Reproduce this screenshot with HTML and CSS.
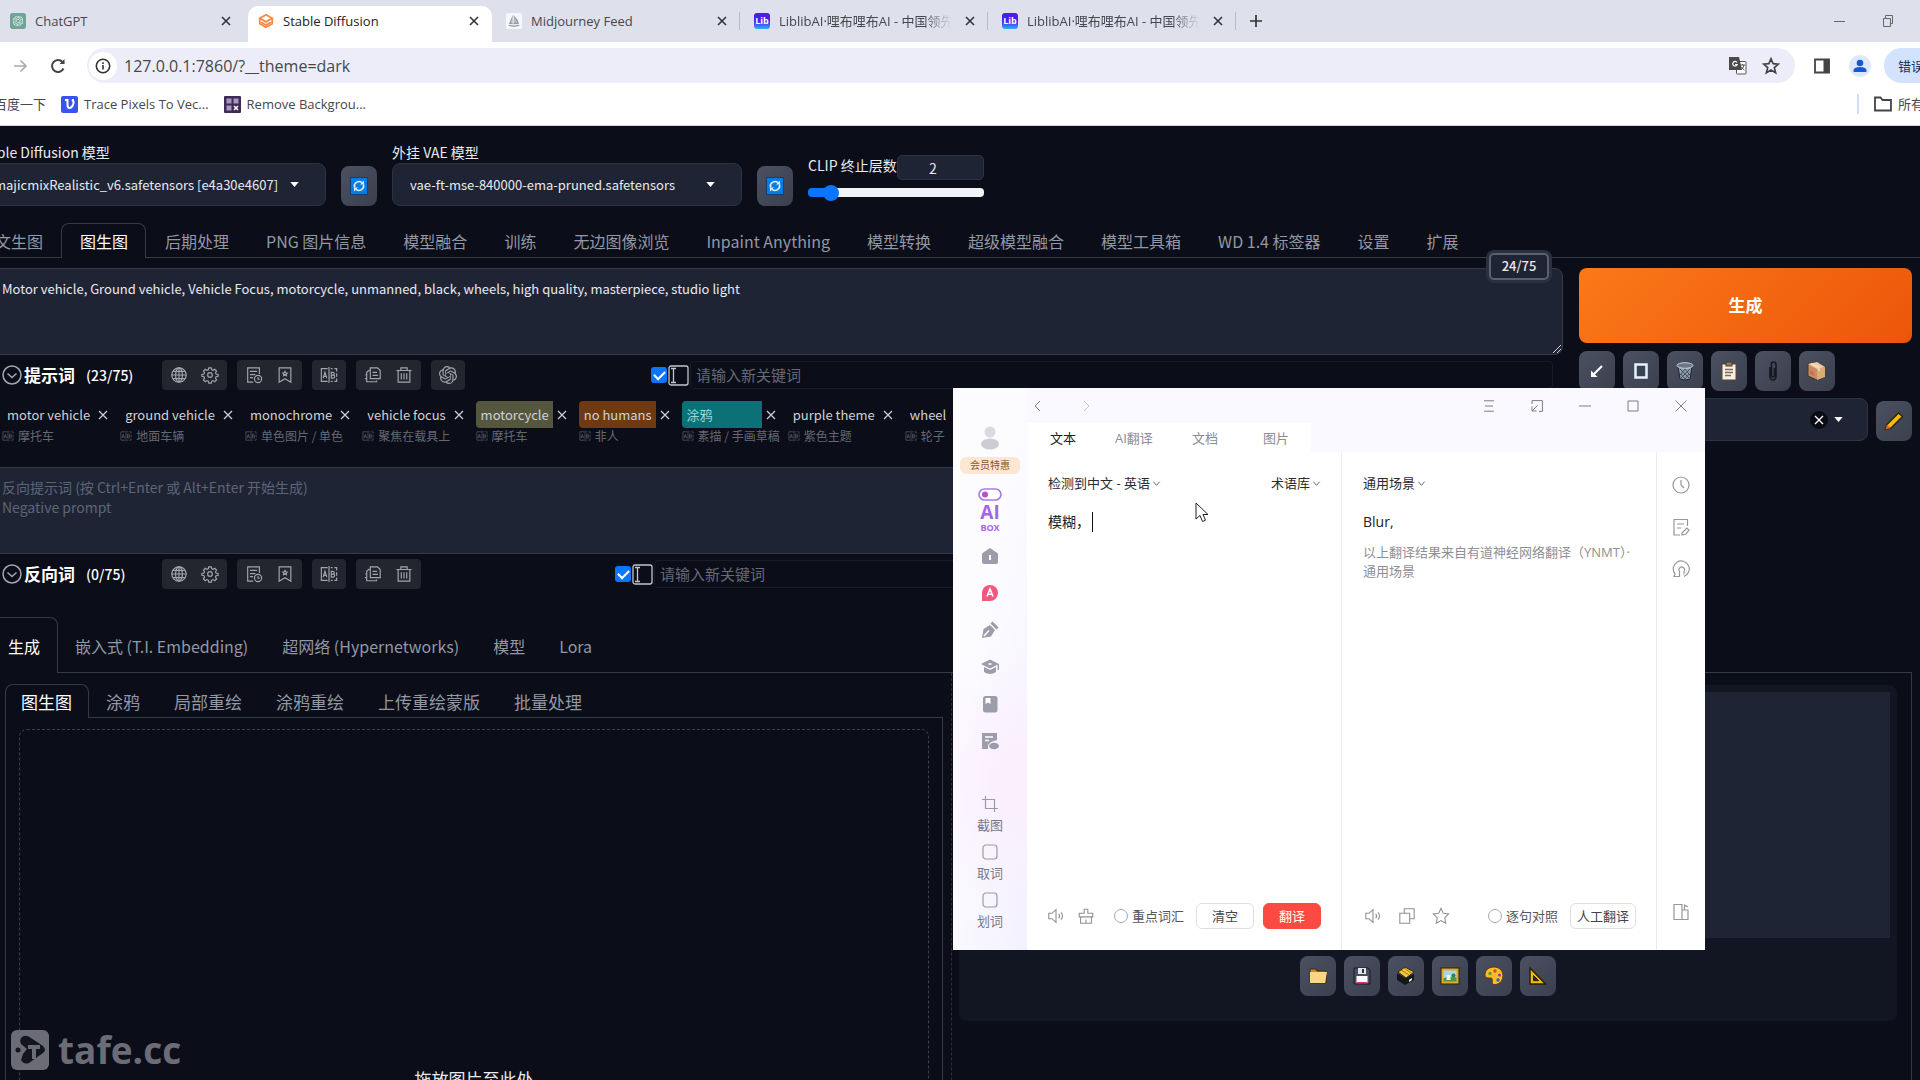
FILE: index.html
```html
<!DOCTYPE html>
<html lang="zh-CN">
<head>
<meta charset="utf-8">
<title>Stable Diffusion</title>
<link rel="stylesheet" href="styles.css">
</head>
<body>
<svg class="sprite" aria-hidden="true">
  <symbol id="x" viewBox="0 0 12 12"><path d="M2 2l8 8M10 2l-8 8"/></symbol>
  <symbol id="chev" viewBox="0 0 10 10"><path d="M1.500 3l3.500 4 3.500-4"/></symbol>
  <symbol id="caret" viewBox="0 0 10 6"><path d="M0 0h10l-5 6z"/></symbol>
  <symbol id="refresh" viewBox="0 0 18 18"><rect width="18" height="18" fill="#0b3f78"/><rect x="1" y="1" width="16" height="16" fill="#0a7be0"/><g fill="none" stroke="#d9efff" stroke-width="1.600"><path d="M4.600 10.500a4.600 4.600 0 0 1 7.300-4.900M13.400 7.500a4.600 4.600 0 0 1-7.300 4.900"/></g><path d="M10 7.500h4v-4zM8 10.500H4v4z" fill="#d9efff"/></symbol>
  <symbol id="globe" viewBox="0 0 20 20"><circle cx="10" cy="10" r="8"/><ellipse cx="10" cy="10" rx="3.800" ry="8"/><path d="M2 10h16M10 2v16M3.300 6h13.400M3.300 14h13.400"/></symbol>
  <symbol id="gear" viewBox="0 0 20 20"><circle cx="10" cy="10" r="2.600"/><path d="M8.600 2h2.800l.5 2.200 1.500.6 1.900-1.200 2 2-1.200 1.900.6 1.500 2.300.5v1.900l-2.300.6-.6 1.500 1.200 1.900-2 2-1.900-1.200-1.500.6-.5 2.200H8.600l-.5-2.200-1.500-.6-1.900 1.200-2-2 1.200-1.900-.6-1.500L1 11.400V9.500L3.300 9l.6-1.500-1.200-1.900 2-2 1.900 1.200 1.500-.6z"/></symbol>
  <symbol id="history" viewBox="0 0 20 20"><path d="M9 18H3V2h13v7M5.500 6h8M5.500 9.500h6M5.500 13H9"/><circle cx="14.500" cy="14.500" r="4"/><path d="M14.500 12.500v2.200h2"/></symbol>
  <symbol id="mark" viewBox="0 0 20 20"><path d="M3.500 2h13v16L10 14.200 3.500 18zM10 6l.8 1.500 1.700.3-1.200 1.200.3 1.700-1.600-.8-1.600.8.3-1.700L7.500 7.800l1.700-.3z"/></symbol>
  <symbol id="ab" viewBox="0 0 20 20"><path d="M8.500 3H1.500v14h7M10 1v18M12 3h2M16 3h2.500v3M18.500 8v4M18.500 14v3H16M14 17h-2M3.500 13.500L5.500 7l2 6.500M4.200 11.500h2.700M12.500 7v6.500h2.400q1.400-.2 1.400-1.800t-1.800-1.600q1.400-.1 1.400-1.500T14.500 7zM12.500 10.100h2"/></symbol>
  <symbol id="copy" viewBox="0 0 20 20"><path d="M7 2h8l3 3v9H7zM9.500 7h5M9.500 10.500h6M6 4.500L3 7v10.500h11V16M3 10H1.500M3 14H1"/></symbol>
  <symbol id="bin" viewBox="0 0 20 20"><path d="M1.500 5h17M6.500 5V2h7v3M3.500 5v13h13V5M7 8v7M10 8v7M13 8v7"/></symbol>
  <symbol id="gpt" viewBox="0 0 24 24"><path d="M22.2819 9.8211a5.9847 5.9847 0 0 0-.5157-4.9108 6.0462 6.0462 0 0 0-6.5098-2.9A6.0651 6.0651 0 0 0 4.9807 4.1818a5.9847 5.9847 0 0 0-3.9977 2.9 6.0462 6.0462 0 0 0 .7427 7.0966 5.98 5.98 0 0 0 .511 4.9107 6.051 6.051 0 0 0 6.5146 2.9001A5.9847 5.9847 0 0 0 13.2599 24a6.0557 6.0557 0 0 0 5.7718-4.2058 5.9894 5.9894 0 0 0 3.9977-2.9001 6.0557 6.0557 0 0 0-.7475-7.0729zm-9.022 12.6081a4.4755 4.4755 0 0 1-2.8764-1.0408l.1419-.0804 4.7783-2.7582a.7948.7948 0 0 0 .3927-.6813v-6.7369l2.02 1.1686a.071.071 0 0 1 .038.052v5.5826a4.504 4.504 0 0 1-4.4945 4.4944zm-9.6607-4.1254a4.4708 4.4708 0 0 1-.5346-3.0137l.142.0852 4.783 2.7582a.7712.7712 0 0 0 .7806 0l5.8428-3.3685v2.3324a.0804.0804 0 0 1-.0332.0615L9.74 19.9502a4.4992 4.4992 0 0 1-6.1408-1.6464zM2.3408 7.8956a4.485 4.485 0 0 1 2.3655-1.9728V11.6a.7664.7664 0 0 0 .3879.6765l5.8144 3.3543-2.0201 1.1685a.0757.0757 0 0 1-.071 0l-4.8303-2.7865A4.504 4.504 0 0 1 2.3408 7.872zm16.5963 3.8558L13.1038 8.364 15.1192 7.2a.0757.0757 0 0 1 .071 0l4.8303 2.7913a4.4944 4.4944 0 0 1-.6765 8.1042v-5.6772a.79.79 0 0 0-.407-.667zm2.0107-3.0231l-.142-.0852-4.7735-2.7818a.7759.7759 0 0 0-.7854 0L9.409 9.2297V6.8974a.0662.0662 0 0 1 .0284-.0615l4.8303-2.7866a4.4992 4.4992 0 0 1 6.6802 4.66zM8.3065 12.863l-2.02-1.1638a.0804.0804 0 0 1-.038-.0567V6.0742a4.4992 4.4992 0 0 1 7.3757-3.4537l-.142.0805L8.704 5.459a.7948.7948 0 0 0-.3927.6813zm1.0976-2.3654l2.602-1.4998 2.6069 1.4998v2.9994l-2.5974 1.4997-2.6067-1.4997Z"/></symbol>
  <symbol id="ibeam" viewBox="0 0 21 21"><rect x="1" y="1" width="19" height="19" rx="2"/><path d="M3 3.500h5M3 17.500h5M5.500 3.500v14"/></symbol>
  <symbol id="fold" viewBox="0 0 20 20"><circle cx="10" cy="10" r="9"/><path d="M5.500 8.500L10 12.500l4.500-4"/></symbol>
  <symbol id="sound" viewBox="0 0 20 20"><path d="M2 7h3.500L10 3v14l-4.500-4H2zM13 7.500q2 2.500 0 5M15.500 6q3.500 4 0 8"/></symbol>
</svg>

<div class="app">
  <header class="chrome">
    <nav class="tabstrip" aria-label="标签页">
      <a class="btab" href="#"><svg class="fav" viewBox="0 0 18 18"><rect width="18" height="18" rx="3" fill="#6fa596"/><g transform="translate(3 3) scale(.5)" fill="#e3f1ed"><use href="#gpt" width="24" height="24"/></g></svg><span class="btitle">ChatGPT</span><svg class="close"><use href="#x"/></svg></a>
      <a class="btab on" href="#"><svg class="fav" viewBox="0 0 18 18" fill="none" stroke="#f58a45" stroke-width="2"><path d="M2 6l7-4 7 4-7 4zM2 6v6l7 4 7-4V6M2 9.500l7 4 7-4"/></svg><span class="btitle">Stable Diffusion</span><svg class="close"><use href="#x"/></svg></a>
      <a class="btab" href="#"><svg class="fav" viewBox="0 0 18 18"><rect width="18" height="18" rx="2" fill="#f6f7fa"/><path d="M4 12L8 3q5 3 6 9zM3 14q6 2 12 0" fill="#b3b7c0" stroke="#888d98"/><path d="M8 3v9" stroke="#fff"/></svg><span class="btitle">Midjourney Feed</span><svg class="close"><use href="#x"/></svg></a>
      <a class="btab sep" href="#"><span class="lib">Lib</span><span class="btitle">LiblibAI·哩布哩布AI - 中国领先</span><svg class="close"><use href="#x"/></svg></a>
      <a class="btab sep" href="#"><span class="lib">Lib</span><span class="btitle">LiblibAI·哩布哩布AI - 中国领先</span><svg class="close"><use href="#x"/></svg></a>
      <button class="newtab" aria-label="新标签页"><svg viewBox="0 0 12 12" width="12" height="12"><path d="M6 0v12M0 6h12" stroke="#333" stroke-width="1.700"/></svg></button>
      <span class="grow"></span>
      <svg class="winctl" viewBox="0 0 60 12" width="60" height="12" fill="none" stroke="#666"><path d="M0 6.500h11M49.500 3.500h7v8h-7zM51.500 3V.5h7v8H57"/></svg>
    </nav>
    <div class="toolbar">
      <svg class="tico" viewBox="0 0 18 18" stroke="#a9abb0" stroke-width="1.700" fill="none"><path d="M3 9h12M9.500 3.500L15 9l-5.500 5.500"/></svg>
      <svg class="tico" viewBox="0 0 18 18" stroke="#444" stroke-width="2" fill="none"><path d="M14.500 11.500A6 6 0 1 1 13.500 5L15 6.500"/><path d="M15.500 2v5h-5z" fill="#444" stroke="none"/></svg>
      <div class="omnibox">
        <span class="info"><svg viewBox="0 0 16 16" width="16" height="16" fill="none" stroke="#333" stroke-width="1.600"><circle cx="8" cy="8" r="6.700"/><path d="M8 7v4.500M8 4.300v1.600"/></svg></span>
        <input class="url" aria-label="地址" value="127.0.0.1:7860/?__theme=dark">
        <svg viewBox="0 0 20 20" width="20" height="20"><rect x="8.500" y="5.500" width="9.500" height="12.500" rx="1" fill="#fff" stroke="#555"/><path d="M1 1h10l3 13H1z" fill="#4a4a4a"/><path d="M9 6.500a2.300 2.300 0 1 0 .2 2H7" fill="none" stroke="#fff" stroke-width="1.200"/><path d="M12 9h5M14.500 8v1M16 9q-1 4-3 5M13.500 11q1 2 3 3" fill="none" stroke="#555"/></svg>
        <svg viewBox="0 0 18 18" width="18" height="18" fill="none" stroke="#444" stroke-width="1.700"><path d="M9 1.800l2.100 4.900 5.200.4-4 3.500 1.300 5.200L9 13l-4.600 2.800 1.300-5.200-4-3.500 5.200-.4z"/></svg>
      </div>
      <svg class="tico panel" viewBox="0 0 18 18"><path d="M2 2.500h14v13H2z" fill="none" stroke="#444" stroke-width="1.800"/><path d="M10.500 2h6v14h-6z" fill="#444"/></svg>
      <svg viewBox="0 0 22 22" width="22" height="22"><circle cx="11" cy="11" r="11" fill="#dfe7fd"/><circle cx="11" cy="8" r="3.300" fill="#1a57d6"/><path d="M4.500 17v-1.500q0-3.500 6.500-3.500t6.500 3.500V17z" fill="#1a57d6"/></svg>
      <button class="errpill">错误</button>
    </div>
    <nav class="bookmarks" aria-label="书签">
      <a class="bm first" href="#">百度一下</a>
      <a class="bm" href="#"><svg viewBox="0 0 17 17" width="17" height="17"><rect width="17" height="17" rx="2" fill="#3b53ee"/><path d="M4 4h2.500v5q0 3 2 3t3.500-3q1.500-4-1-5h2" fill="none" stroke="#fff" stroke-width="2"/></svg>Trace Pixels To Vec...</a>
      <a class="bm" href="#"><svg viewBox="0 0 17 17" width="17" height="17"><rect width="17" height="17" rx="1" fill="#3e2a57"/><path d="M2.500 2.500h5v5h-5zM9.500 2.500h5v5h-5zM2.500 9.500h5v5h-5z" fill="#a797bd"/><path d="M10 10l4 4M14 10l-4 4" stroke="#fff" stroke-width="1.500"/></svg>Remove Backgrou...</a>
      <span class="grow"></span>
      <a class="bm all" href="#"><svg viewBox="0 0 18 16" width="18" height="16" fill="none" stroke="#444" stroke-width="1.800"><path d="M1 14.500v-13h5.500l2 2.500H17v10.500z"/></svg>所有</a>
    </nav>
  </header>

  <main class="page">
    <section class="quick">
      <div class="field"><label for="ckpt">Stable Diffusion 模型</label>
        <div class="combo"><input id="ckpt" value="majicmixRealistic_v6.safetensors [e4a30e4607]"><svg class="caret"><use href="#caret"/></svg></div></div>
      <button class="tool" aria-label="刷新模型"><svg width="18" height="18"><use href="#refresh"/></svg></button>
      <div class="field"><label for="vae">外挂 VAE 模型</label>
        <div class="combo"><input id="vae" value="vae-ft-mse-840000-ema-pruned.safetensors"><svg class="caret"><use href="#caret"/></svg></div></div>
      <button class="tool" aria-label="刷新 VAE"><svg width="18" height="18"><use href="#refresh"/></svg></button>
      <div class="clip">
        <div class="cliprow"><label for="clip">CLIP 终止层数</label><input class="num" id="clip" value="2"></div>
        <input class="range" type="range" min="1" max="12" value="2" aria-label="CLIP 终止层数">
      </div>
    </section>

    <nav class="tabs">
      <button class="tab">文生图</button><button class="tab on">图生图</button><button class="tab">后期处理</button><button class="tab">PNG 图片信息</button><button class="tab">模型融合</button><button class="tab">训练</button><button class="tab">无边图像浏览</button><button class="tab">Inpaint Anything</button><button class="tab">模型转换</button><button class="tab">超级模型融合</button><button class="tab">模型工具箱</button><button class="tab">WD 1.4 标签器</button><button class="tab">设置</button><button class="tab">扩展</button>
    </nav>

    <div class="top">
      <div class="prompts">
        <div class="area">
          <textarea class="prompt" aria-label="提示词">Motor vehicle, Ground vehicle, Vehicle Focus, motorcycle, unmanned, black, wheels, high quality, masterpiece, studio light</textarea>
          <svg class="grip" viewBox="0 0 8 8" width="8" height="8"><path d="M0 8l8-8M4 8l4-4" stroke="#d5d7dd"/></svg>
          <span class="counter">24/75</span>
        </div>
        <div class="ptools">
          <svg class="fold"><use href="#fold"/></svg><h2>提示词</h2><span class="count">(23/75)</span>
          <div class="groups">
            <div class="grp"><button aria-label="语言"><svg><use href="#globe"/></svg></button><button aria-label="设置"><svg><use href="#gear"/></svg></button></div>
            <div class="grp"><button aria-label="历史"><svg><use href="#history"/></svg></button><button aria-label="收藏"><svg><use href="#mark"/></svg></button></div>
            <div class="grp"><button aria-label="翻译"><svg><use href="#ab"/></svg></button></div>
            <div class="grp"><button aria-label="复制"><svg><use href="#copy"/></svg></button><button aria-label="删除"><svg><use href="#bin"/></svg></button></div>
            <div class="grp"><button aria-label="ChatGPT"><svg class="solid"><use href="#gpt"/></svg></button></div>
          </div>
          <div class="addkey wide"><input class="tick" type="checkbox" checked aria-label="启用"><svg class="ibeam"><use href="#ibeam"/></svg><input class="key" aria-label="新关键词" placeholder="请输入新关键词"></div>
        </div>
        <div class="tags">
          <div class="tag"><div class="trow"><span>motor vehicle</span><button aria-label="移除"><svg><use href="#x"/></svg></button></div><small><svg><use href="#ab"/></svg>摩托车</small></div>
          <div class="tag"><div class="trow"><span>ground vehicle</span><button aria-label="移除"><svg><use href="#x"/></svg></button></div><small><svg><use href="#ab"/></svg>地面车辆</small></div>
          <div class="tag"><div class="trow"><span>monochrome</span><button aria-label="移除"><svg><use href="#x"/></svg></button></div><small><svg><use href="#ab"/></svg>单色图片 / 单色</small></div>
          <div class="tag"><div class="trow"><span>vehicle focus</span><button aria-label="移除"><svg><use href="#x"/></svg></button></div><small><svg><use href="#ab"/></svg>聚焦在载具上</small></div>
          <div class="tag olive"><div class="trow"><span>motorcycle</span><button aria-label="移除"><svg><use href="#x"/></svg></button></div><small><svg><use href="#ab"/></svg>摩托车</small></div>
          <div class="tag brown"><div class="trow"><span>no humans</span><button aria-label="移除"><svg><use href="#x"/></svg></button></div><small><svg><use href="#ab"/></svg>非人</small></div>
          <div class="tag teal"><div class="trow"><span>涂鸦</span><button aria-label="移除"><svg><use href="#x"/></svg></button></div><small><svg><use href="#ab"/></svg>素描 / 手画草稿</small></div>
          <div class="tag"><div class="trow"><span>purple theme</span><button aria-label="移除"><svg><use href="#x"/></svg></button></div><small><svg><use href="#ab"/></svg>紫色主题</small></div>
          <div class="tag"><div class="trow"><span>wheel</span><button aria-label="移除"><svg><use href="#x"/></svg></button></div><small><svg><use href="#ab"/></svg>轮子</small></div>
        </div>
        <textarea class="prompt neg" aria-label="反向提示词" placeholder="反向提示词 (按 Ctrl+Enter 或 Alt+Enter 开始生成)&#10;Negative prompt"></textarea>
        <div class="ptools">
          <svg class="fold"><use href="#fold"/></svg><h2>反向词</h2><span class="count">(0/75)</span>
          <div class="groups">
            <div class="grp"><button aria-label="语言"><svg><use href="#globe"/></svg></button><button aria-label="设置"><svg><use href="#gear"/></svg></button></div>
            <div class="grp"><button aria-label="历史"><svg><use href="#history"/></svg></button><button aria-label="收藏"><svg><use href="#mark"/></svg></button></div>
            <div class="grp"><button aria-label="翻译"><svg><use href="#ab"/></svg></button></div>
            <div class="grp"><button aria-label="复制"><svg><use href="#copy"/></svg></button><button aria-label="删除"><svg><use href="#bin"/></svg></button></div>
          </div>
          <div class="addkey"><input class="tick" type="checkbox" checked aria-label="启用"><svg class="ibeam"><use href="#ibeam"/></svg><input class="key" aria-label="新反向关键词" placeholder="请输入新关键词"></div>
        </div>
      </div>

      <aside class="actions">
        <button class="generate">生成</button>
        <div class="toolrow">
          <button class="tool" aria-label="读取参数"><svg viewBox="0 0 18 18" width="18" height="18"><path d="M14 4L6 12" stroke="#fff" stroke-width="2.200"/><path d="M3 15V8.500l6.500 6.500z" fill="#fff"/></svg></button>
          <button class="tool" aria-label="清除"><svg viewBox="0 0 18 18" width="18" height="18"><rect x="3.500" y="2.500" width="11" height="13" fill="#39424f" stroke="#e4f3ff" stroke-width="2.500"/></svg></button>
          <button class="tool" aria-label="清空提示词"><svg viewBox="0 0 18 20" width="18" height="20"><path d="M2 5l2 13q5 2 10 0l2-13z" fill="#8e9cab" stroke="#1c2530"/><path d="M4 8l9 9M8 7l6 7M5 13l4 5M14 8l-9 9M10 7l-6 7M13 13l-4 5" stroke="#45515e"/><ellipse cx="9" cy="4.500" rx="8" ry="2.800" fill="#6a7886" stroke="#c6d0da"/></svg></button>
          <button class="tool" aria-label="应用样式"><svg viewBox="0 0 18 20" width="18" height="20"><rect x="2" y="3" width="14" height="16" fill="#f6efe2" stroke="#5a4630"/><rect x="6" y="1" width="6" height="4" fill="#8c7b66" stroke="#4b3b28"/><path d="M5 8.500h8M5 11.500h8M5 14.500h6" stroke="#7a6c5c" stroke-width="1.400"/></svg></button>
          <button class="tool" aria-label="附加"><svg viewBox="0 0 10 20" width="10" height="20" fill="none" stroke="#141821" stroke-width="1.600"><path d="M2 6v9q0 4 3 4t3-4V4q0-3-2.500-3T3.500 4v10q0 2 1.500 2t1.500-2V7"/></svg></button>
          <button class="tool" aria-label="保存样式"><svg viewBox="0 0 20 20" width="20" height="20"><path d="M1 3l9-2 8 5v10l-8 3-9-4z" fill="#c58f63" stroke="#4c3526"/><path d="M1 3l9-2 8 5-8 2z" fill="#eccaa3"/><path d="M10 8l8-2v10l-8 3z" fill="#dbab77"/><path d="M4 2.500l8 4v3.500" fill="none" stroke="#f6dfbd" stroke-width="1.600"/><path d="M3 9l4 2v4l-4-2z" fill="#c96d62"/></svg></button>
        </div>
        <div class="stylerow">
          <div class="combo"><input aria-label="预设样式"><span class="clear"><svg><use href="#x"/></svg></span><svg class="caret"><use href="#caret"/></svg></div>
          <button class="tool" aria-label="编辑样式"><svg viewBox="0 0 20 20" width="20" height="20"><path d="M1.500 18.500l1.500-5L14.500 2l4 3.500L7 17z" fill="#f7b916" stroke="#2b2110" stroke-width="1.400"/><path d="M1.500 18.500l1.500-5L7 17z" fill="#e26a1f"/></svg></button>
        </div>
      </aside>
    </div>

    <nav class="tabs big">
      <button class="tab on">生成</button><button class="tab">嵌入式 (T.I. Embedding)</button><button class="tab">超网络 (Hypernetworks)</button><button class="tab">模型</button><button class="tab">Lora</button>
    </nav>

    <div class="bottom">
      <section class="source">
        <nav class="tabs sub">
          <button class="tab on">图生图</button><button class="tab">涂鸦</button><button class="tab">局部重绘</button><button class="tab">涂鸦重绘</button><button class="tab">上传重绘蒙版</button><button class="tab">批量处理</button>
        </nav>
        <div class="pane"><button class="drop">拖放图片至此处</button></div>
      </section>
      <section class="output">
        <div class="group">
          <div class="gallery"></div>
          <div class="toolrow">
            <button class="tool" aria-label="打开目录"><svg viewBox="0 0 20 18" width="20" height="18"><path d="M2 2h6l1 2h9v12H2z" fill="#c98a2a" stroke="#3a2a10"/><path d="M2 5h17l-2 11H2z" fill="#fdd585"/></svg></button>
            <button class="tool" aria-label="保存"><svg viewBox="0 0 18 18" width="18" height="18"><path d="M1 1h14l2 2v14H1z" fill="#4b4d5c" stroke="#1b1c26"/><rect x="5" y="1" width="8" height="6" fill="#dfe3ea"/><rect x="9" y="2" width="2" height="4" fill="#333"/><rect x="3.500" y="9" width="11" height="7" fill="#fff"/><rect x="3.500" y="15" width="11" height="1.500" fill="#d9318a"/></svg></button>
            <button class="tool" aria-label="打包"><svg viewBox="0 0 20 20" width="20" height="20"><path d="M1 7v7l8 5 9-5V8l-9 4z" fill="#15171c"/><path d="M2 6l7-5 9 5-8 6z" fill="#f3c545" stroke="#33270a"/><path d="M5 4l8 5M8 2l7 5" stroke="#a67a12"/><path d="M13 14l3-2v2l-3 2z" fill="#f4f4f4"/></svg></button>
            <button class="tool" aria-label="发送到图生图"><svg viewBox="0 0 20 18" width="20" height="18"><rect x="1" y="1" width="18" height="16" fill="#e0a921" stroke="#2f250a"/><rect x="3.500" y="3.500" width="13" height="11" fill="#a8d4ef"/><path d="M3.500 14.500v-3l4-2 9 1v4z" fill="#4d9448"/><path d="M6.500 8h4v5h-4z" fill="#f4eee6"/><circle cx="13.500" cy="8.500" r="2" fill="#31803b"/></svg></button>
            <button class="tool" aria-label="发送到重绘"><svg viewBox="0 0 20 20" width="20" height="20"><path d="M10 1C4 1 1 5 1 8.500c0 4 3.500 3.500 5.500 3.500 3 0 1 3 2 5.500 1 2.500 10.500 1 10.500-8C19 4.500 15 1 10 1z" fill="#fbbc2c" stroke="#5b3c06"/><circle cx="6" cy="7.500" r="1.700" fill="#5d9c2f"/><circle cx="11" cy="5" r="1.700" fill="#e0452f"/><circle cx="15.500" cy="9" r="1.500" fill="#7545b5"/><circle cx="14" cy="14" r="1.700" fill="#2a62bc"/></svg></button>
            <button class="tool" aria-label="发送到后期处理"><svg viewBox="0 0 20 20" width="20" height="20"><path d="M2 2l15.500 16H2z" fill="#f2b90f" stroke="#2a2207" stroke-width="1.500"/><path d="M5.500 9.500l5 5.200h-5z" fill="#242633" stroke="#2a2207"/></svg></button>
          </div>
        </div>
      </section>
    </div>
  </main>

  <section class="window" aria-label="翻译">
    <aside class="side">
      <svg width="22" height="24" viewBox="0 0 22 24"><circle cx="11" cy="6" r="5.500" fill="#d9d9de"/><ellipse cx="11" cy="18" rx="9" ry="5.500" fill="#ccccd2"/></svg>
      <span class="vip">会员特惠</span>
      <div class="aibox"><svg width="24" height="13" viewBox="0 0 24 13"><rect x="1" y="1" width="22" height="11" rx="5.500" fill="#fff" stroke="#a879ea" stroke-width="1.600"/><circle cx="7" cy="6.500" r="3" fill="#b553c4"/></svg><b>AI</b><i>BOX</i></div>
      <div class="apps">
        <svg viewBox="0 0 18 18"><path d="M9 1l8 5.500V15q0 2-2 2H3q-2 0-2-2V6.500z" fill="#9c9cab"/><path d="M9 8v5" stroke="#fff" stroke-width="2"/></svg>
        <svg viewBox="0 0 18 18"><path d="M9 1a8 8 0 1 1 0 16H1V9a8 8 0 0 1 8-8z" fill="#f4577d"/><path d="M6 12.500L9 5l3 7.500M7 10.300h4" fill="none" stroke="#fff" stroke-width="1.600"/></svg>
        <svg viewBox="0 0 18 18"><path d="M1 17L2.500 8 9 4l5 5-4 6.500z" fill="#9c9cab"/><path d="M10.500 1.500l6 6" stroke="#9c9cab" stroke-width="3"/><path d="M3 15l5-5.500" stroke="#fff" stroke-width="1.500"/></svg>
        <svg viewBox="0 0 18 18"><path d="M0 6l9-4.500L18 6l-9 4.500zM3 9l6 3 6-3v5q-6 4-12 0z" fill="#9c9cab"/><path d="M17.300 6v6" stroke="#9c9cab" stroke-width="1.400"/><path d="M6.500 6l2.500-1 2.500 1L9 7z" fill="#fff"/></svg>
        <svg viewBox="0 0 18 18"><rect x="2" y="1" width="14.500" height="16.500" rx="2.500" fill="#9c9cab"/><path d="M4.500 3h5v6L7 7.500 4.500 9z" fill="#fff"/></svg>
        <svg viewBox="0 0 18 18"><path d="M1 1h15v7l-6 2-3 3v4H1z" fill="#9c9cab"/><path d="M4 5h8M4 8.500h4" stroke="#fff" stroke-width="1.400"/><ellipse cx="13" cy="14" rx="5" ry="3.300" fill="#9c9cab"/></svg>
      </div>
      <button class="sbtn"><svg viewBox="0 0 16 16"><path d="M0 3.500h12.500V16M3.500 0v12.500H16"/></svg>截图</button>
      <button class="sbtn"><svg viewBox="0 0 16 16"><rect x="1" y="1" width="14" height="14" rx="3"/></svg>取词</button>
      <button class="sbtn"><svg viewBox="0 0 16 16"><rect x="1" y="1" width="14" height="14" rx="3"/></svg>划词</button>
    </aside>
    <div class="wmain">
      <header class="whead">
        <div class="wbar">
          <svg viewBox="0 0 12 12"><path d="M8 1L3 6l5 5"/></svg>
          <svg class="dim" viewBox="0 0 12 12"><path d="M4 1l5 5-5 5"/></svg>
          <span class="grow"></span>
          <svg viewBox="0 0 12 12"><path d="M1 .8h10M2 6h8M1 11.200h10"/></svg>
          <svg viewBox="0 0 12 12"><path d="M1 4V.6h10.400v10.800H8M6.500 5.500L1 11M1 6.500V11h4.500"/></svg>
          <svg viewBox="0 0 12 12"><path d="M0 6h12"/></svg>
          <svg viewBox="0 0 12 12"><path d="M1 1h10v10H1z"/></svg>
          <svg viewBox="0 0 12 12"><path d="M.5.5l11 11M11.500.5l-11 11"/></svg>
        </div>
        <nav class="wtabs"><button class="on">文本</button><button>AI翻译</button><button>文档</button><button>图片</button></nav>
      </header>
      <div class="wbody">
        <div class="col from">
          <div class="langs"><button>检测到中文 - 英语<svg><use href="#chev"/></svg></button><button>术语库<svg><use href="#chev"/></svg></button></div>
          <p class="txt">模糊，<span class="cursor"></span></p>
          <div class="foot">
            <svg class="fi"><use href="#sound"/></svg>
            <svg class="fi" viewBox="0 0 20 20"><path d="M2.500 11V7H8V2.500h4V7h5.500v4zM4 11v7h12v-7M10 18v-4"/></svg>
            <label class="opt"><input type="radio" name="focus">重点词汇</label>
            <button class="wbtn">清空</button><button class="wbtn red">翻译</button>
          </div>
        </div>
        <div class="col to">
          <div class="langs"><button>通用场景<svg><use href="#chev"/></svg></button></div>
          <p class="txt">Blur,</p>
          <p class="note">以上翻译结果来自有道神经网络翻译（YNMT）·<br>通用场景</p>
          <div class="foot">
            <svg class="fi"><use href="#sound"/></svg>
            <svg class="fi" viewBox="0 0 20 20"><path d="M2 7h11v11H2zM7 7V2h11v11h-5"/></svg>
            <svg class="fi" viewBox="0 0 20 20"><path d="M10 1.500l2.500 5.500 6 .7-4.300 4.200 1 6.100-5.200-3-5.200 3 1-6.100L1.500 7.700l6-.7z"/></svg>
            <label class="opt"><input type="radio" name="pair">逐句对照</label>
            <button class="wbtn">人工翻译</button>
          </div>
        </div>
        <div class="rail">
          <svg viewBox="0 0 18 18"><circle cx="9" cy="9" r="8"/><path d="M9 4v5l3 3"/></svg>
          <svg viewBox="0 0 18 18"><path d="M8 17H2V1.500h13.500V8M5 6h7M5 10h4M10 15l5-5 2 2-3 4-4 1z"/></svg>
          <svg viewBox="0 0 18 18"><path d="M12 16.500a8 8 0 1 0-9-2.500l-1 2.500h5.500v-5a2.800 2.800 0 1 1 4.500 0v3"/></svg>
          <span class="grow"></span>
          <svg viewBox="0 0 18 18"><path d="M2 1.500h8v15H2zM10 7h6v9.500h-6M12.500 7V2L16 4"/></svg>
        </div>
      </div>
    </div>
  </section>

  <svg class="pointer" viewBox="0 0 14 22" width="14" height="22"><path d="M1 1v16l4-3.500 2.500 6 3-1.300L8 12.500h5z" fill="#fff" stroke="#222"/></svg>

  <div class="watermark"><svg viewBox="0 0 38 40" width="38" height="40"><rect width="38" height="40" rx="6" fill="#6b6c76"/><path d="M11 7q4-3 9 1l12 8q4 4 0 7L18 33q-5 2-8-3l2-6 4-5-6-5q-2-4 1-7z" fill="#14161f"/><path d="M17 17h12M23 17v12" stroke="#6b6c76" stroke-width="4"/><circle cx="7" cy="20" r="2.500" fill="#14161f"/></svg>tafe.cc</div>
</div>
</body>
</html>
```
FILE: styles.css
```css
:root {
  --bg: #0b0d18;
  --field: #1f2435;
  --line: #353a48;
  --muted: #9298a5;
  --cjk: "Noto Sans CJK SC", sans-serif;
  --ui: "Open Sans", "Noto Sans CJK SC", sans-serif;
}
* { box-sizing: border-box; }
body { margin: 0; background: var(--bg); color: #e8eaef; font: 15px/20px var(--cjk); }
button, input, textarea { font: inherit; color: inherit; margin: 0; padding: 0; border: 0; background: none; }
input { min-width: 0; outline: 0; }
a { color: inherit; text-decoration: none; }
h2, p { margin: 0; }
svg { flex: none; display: block; }
.sprite { position: absolute; width: 0; height: 0; }
.grow { flex: 1; }
.app { position: relative; display: flex; flex-direction: column; height: 100vh; overflow: hidden; }

/* browser frame */
.chrome { background: #fff; color: #45474c; font: 13px/20px var(--ui); border-bottom: 1px solid #d5d6dc; }
.tabstrip { display: flex; height: 42px; background: #dee1ec; padding-right: 26px; align-items: center; }
.btab { position: relative; display: flex; align-items: center; gap: 9px; width: 248px; height: 36px; padding: 0 16px 6px 10px; align-self: flex-end; }
.btab.on { background: #fff; border-radius: 10px 10px 0 0; color: #222; width: 244px; margin-right: 4px; padding-right: 12px; }
.btab.sep::before { content: ""; width: 1px; height: 18px; background: #b8bcc9; position: absolute; left: -5px; }
.btab:nth-child(5)::after { content: ""; width: 1px; height: 18px; background: #b8bcc9; position: absolute; right: 4px; }
.btitle { flex: 1; overflow: hidden; white-space: nowrap; }
.sep .btitle { mask-image: linear-gradient(90deg, #000 82%, transparent 98%); }
.fav { width: 16px; height: 16px; }
.lib { width: 16px; height: 16px; border-radius: 3px; background: linear-gradient(#4a1ee8 50%, #2fb0ff); color: #fff; font: bold 9px/16px var(--ui); text-align: center; }
.close { width: 12px; height: 12px; stroke: #333; stroke-width: 1.600; }
.newtab { width: 32px; height: 32px; display: grid; place-items: center; }
.toolbar { display: flex; align-items: center; height: 47px; padding-left: 11px; }
.tico { width: 18px; height: 18px; }
.toolbar .tico + .tico { margin-left: 20px; }
.omnibox { flex: 1; display: flex; align-items: center; gap: 14px; height: 35px; margin: 0 18px 0 20px; padding: 0 15px 0 2px; border-radius: 18px; background: #ecedf9; }
.info { width: 28px; height: 28px; border-radius: 14px; background: #fff; display: grid; place-items: center; }
.url { flex: 1; font-size: 16px; margin-left: -7px; }
.panel { margin-right: 18px; }
.errpill { height: 35px; width: 36px; margin-left: 13px; padding-left: 14px; border-radius: 18px 0 0 18px; background: #d3e2fd; color: #14305f; white-space: nowrap; overflow: hidden; text-align: left; }
.bookmarks { display: flex; align-items: center; gap: 15px; height: 36px; padding-bottom: 6px; overflow: hidden; white-space: nowrap; }
.bm { display: flex; align-items: center; gap: 6px; }
.bm.first { margin-left: -6px; }
.bm.all { border-left: 2px solid #d5dcf8; padding-left: 15px; margin-right: -4px; }

/* web ui */
.page { flex: 1; display: flex; flex-direction: column; min-height: 0; margin-left: -24px; }
.quick { display: flex; align-items: flex-end; gap: 15px; padding-top: 17px; }
.field { width: 350px; }
.field label { display: block; line-height: 18px; margin-bottom: 2px; font-size: 14px; }
.combo { display: flex; align-items: center; height: 43px; padding: 0 26px 0 17px; background: var(--field); border: 1px solid #2c3244; border-radius: 8px; }
.combo input { flex: 1; font-size: 13px; }
.caret { width: 9px; height: 5px; fill: #fff; }
.tool { width: 36px; height: 40px; border-radius: 8px; background: linear-gradient(135deg, #4b5160, #3a404e); display: grid; place-items: center; }
.clip { width: 176px; padding-bottom: 9px; }
.cliprow { display: flex; justify-content: space-between; white-space: nowrap; font-size: 14px; }
.num { width: 87px; height: 25px; padding-left: 31px; flex: none; border: 1px solid #2e3446; border-radius: 5px; background: var(--field); font-size: 14px; }
.range { appearance: none; display: block; width: 100%; height: 9px; margin-top: 8px; border-radius: 4px; background: linear-gradient(90deg, #0a75ff 24px, #f2f3f7 24px); }
.range::-webkit-slider-thumb { appearance: none; width: 16px; height: 16px; border-radius: 8px; background: #0a75ff; }

.tabs { display: flex; height: 35px; margin-top: 17px; border-bottom: 1px solid var(--line); }
.tab { padding: 0 17px 0 18px; height: 35px; border: 1px solid transparent; border-bottom: 0; color: var(--muted); font-size: 16px; white-space: nowrap; }
.tab.on { color: #fff; border-color: var(--line); border-radius: 8px 8px 0 0; background: var(--bg); }

.top { display: grid; grid-template-columns: minmax(0, 1fr) 333px; gap: 16px; padding: 10px 8px 0; }
.area { position: relative; }
.prompt { display: block; width: 100%; height: 87px; padding: 10px 17px; border: 1px solid var(--line); border-radius: 8px; background: var(--field); resize: none; font-size: 13px; line-height: 20px; outline: 0; }
.prompt::placeholder { color: #5d6475; }
.neg { margin-top: 23px; padding-top: 9px; font-size: 14px; }
.grip { position: absolute; right: 2px; bottom: 2px; }
.counter { position: absolute; right: 14px; top: -15px; width: 60px; height: 27px; border: 2px solid #596070; border-radius: 5px; background: var(--field); box-shadow: 0 0 0 3px #2b303f; text-align: center; font-weight: 500; font-size: 13px; line-height: 22px; }
.ptools { display: flex; align-items: center; height: 30px; margin-top: 5px; padding-left: 18px; }
.fold { width: 20px; height: 20px; fill: none; stroke: #a5a8b2; stroke-width: 1.500; }
.ptools h2 { margin-left: 2px; font-size: 17px; font-weight: 700; color: #fff; }
.count { width: 76px; margin-left: 11px; color: #fff; font-size: 14px; font-weight: 500; }
.groups { display: flex; gap: 10px; }
.grp { display: flex; gap: 13px; height: 30px; padding: 0 8px; align-items: center; border-radius: 4px; background: #23252f; }
.grp svg { width: 18px; height: 18px; fill: none; stroke: #a3a5ad; stroke-width: 1.300; }
.grp .solid { fill: #a3a5ad; stroke: none; }
.addkey { flex: 1; display: flex; align-items: center; margin-left: 194px; }
.addkey.wide { margin-left: 186px; margin-right: 10px; }
.tick { appearance: none; width: 16px; height: 16px; border-radius: 3px; background: #0a75ff; display: grid; place-items: center; flex: none; }
.tick::before { content: ""; width: 9px; height: 5px; border: solid #fff; border-width: 0 0 2px 2px; transform: rotate(-45deg) translate(1px, -1px); }
.ibeam { width: 21px; height: 21px; margin-left: 1px; fill: none; stroke: #c4c6cc; stroke-width: 1.300; }
.key { flex: 1; height: 28px; margin-left: 1px; padding: 0 0 2px 5px; border: 1px solid #191c28; border-radius: 4px; }
.key::placeholder { color: #666a76; }
.tags { display: flex; gap: 8px; margin: 11px 0 0 18px; overflow: hidden; }
.tag { flex: none; }
.trow { display: flex; height: 27px; font-size: 13px; line-height: 27px; color: #cfd2d9; }
.trow span { flex: 1; padding: 0 4px 0 5px; border-radius: 4px 0 0 4px; }
.trow button { width: 18px; display: grid; place-items: center; }
.trow button svg { width: 12px; height: 12px; stroke: #c9ccd4; stroke-width: 1.300; }
.tag small { display: flex; align-items: center; gap: 4px; height: 16px; font-size: 12px; color: #646873; }
.tag small svg { width: 12px; height: 14px; fill: none; stroke: #555965; stroke-width: 1.300; }
.olive span { background: #54563d; }
.brown span { background: #70390f; }
.teal span { background: #0c7176; color: #9fd9dc; }

.actions { display: flex; flex-direction: column; gap: 8px; }
.generate { height: 75px; padding-bottom: 2px; border-radius: 8px; background: linear-gradient(135deg, #fb7818, #ec560a); color: #fff; font-size: 17px; font-weight: 700; }
.toolrow { display: flex; gap: 8px; }
.stylerow { display: flex; gap: 8px; align-items: flex-end; margin-top: -1px; }
.stylerow .combo { flex: 1; padding-right: 24px; }
.clear { width: 18px; height: 18px; margin-right: 6px; border-radius: 9px; background: #0a0c14; display: grid; place-items: center; }
.clear svg { width: 12px; height: 12px; stroke: #fff; stroke-width: 1.300; }

.tabs.big { height: 56px; margin: 28px 8px 0 14px; }
.big .tab { height: 56px; padding: 0 16px; }
.big .tab.on { padding: 0 17px; }
.bottom { flex: 1; display: grid; grid-template-columns: minmax(0, 1fr) minmax(0, 1fr); gap: 16px; min-height: 0; margin-right: 8px; padding: 0 14px 0 29px; border-right: 1px solid var(--line); }
.source { position: relative; display: flex; flex-direction: column; }
.source::after { content: ""; position: absolute; right: -9px; top: 0; bottom: 0; border-right: 1px dashed #2a2e3b; }
.tabs.sub { height: 34px; margin-top: 11px; }
.sub .tab { height: 34px; padding: 0 16px; font-size: 17px; }
.sub .tab.on { padding: 0 16px 0 15px; }
.pane { flex: 1; padding: 11px 13px; border: solid var(--line); border-width: 0 1px; }
.drop { display: block; width: 100%; height: 700px; border: 1px dashed #3a3f4d; border-radius: 8px; color: #e8eaef; font-size: 17px; }
.group { margin-top: 12px; padding: 7px 7px 25px; border-radius: 8px; background: #121522; }
.gallery { height: 246px; background: var(--field); }
.group .toolrow { justify-content: center; margin-top: 18px; }

/* translator window */
.window { position: absolute; left: 953px; top: 388px; width: 752px; height: 562px; display: flex; background: #fff; color: #2b2b30; font: 13px/20px var(--ui); }
.side { width: 74px; display: flex; flex-direction: column; align-items: center; padding-top: 38px; background: radial-gradient(circle at 100% 70%, #fbeefd, transparent 35%), linear-gradient(100deg, #fcfcff 40%, #f3f1ff); color: #77778a; }
.vip { margin-top: 7px; width: 60px; line-height: 17px; border-radius: 6px; background: #fde7d2; color: #8b5426; font-size: 10px; text-align: center; }
.aibox { display: flex; flex-direction: column; align-items: center; margin-top: 14px; color: #a565e6; }
.aibox b { font-size: 19px; line-height: 22px; }
.aibox i { font: bold 9px/10px var(--ui); }
.apps { display: flex; flex-direction: column; gap: 19px; margin: 14px 0 46px; }
.apps svg { width: 18px; height: 18px; }
.sbtn { display: flex; flex-direction: column; align-items: center; gap: 3px; margin-bottom: 9px; line-height: 20px; height: 39px; }
.sbtn svg { width: 16px; height: 16px; fill: none; stroke: #9a9aa8; stroke-width: 1.200; }
.wmain { flex: 1; display: flex; flex-direction: column; }
.whead { height: 64px; background: #f9f9ff; }
.wbar { display: flex; align-items: center; gap: 36px; height: 35px; padding: 0 18px 0 5px; }
.wbar svg { width: 12px; height: 12px; fill: none; stroke: #7d7d88; }
.wbar .dim { stroke: #c4c4cf; }
.wtabs { display: flex; width: 284px; height: 29px; background: #fff; padding-left: 23px; gap: 39px; color: #8c8c94; line-height: 28px; }
.wtabs button:last-child { margin-left: 6px; }
.wtabs .on { color: #222; }
.wbody { flex: 1; display: flex; }
.col { display: flex; flex-direction: column; width: 315px; padding: 21px 20px 21px 21px; border-right: 1px solid #ebebf0; }
.langs { display: flex; justify-content: space-between; }
.langs button { display: flex; align-items: center; gap: 2px; white-space: nowrap; }
.langs svg { width: 9px; height: 9px; fill: none; stroke: #555; }
.txt { display: flex; align-items: center; margin-top: 19px; font-size: 14px; color: #222; }
.cursor { width: 1px; height: 20px; margin-left: 2px; background: #111; }
.note { margin-top: 11px; line-height: 19px; color: #8f8f94; white-space: nowrap; }
.foot { display: flex; align-items: center; margin: auto 0 0 -1px; height: 26px; color: #55555c; white-space: nowrap; }
.fi { width: 18px; height: 18px; margin-right: 12px; fill: none; stroke: #8f8f96; stroke-width: 1.200; }
.opt { display: flex; align-items: center; gap: 4px; margin-right: auto; margin-left: 7px; }
.to .foot { margin-left: 1px; }
.to .fi { margin-right: 16px; }
.to .opt { margin-left: auto; margin-right: 12px; }
.opt input { appearance: none; width: 14px; height: 14px; border: 1px solid #a9a9b2; border-radius: 7px; }
.wbtn { height: 26px; min-width: 58px; padding: 0 6px; border: 1px solid #dfdfe6; border-radius: 6px; color: #44444a; }
.wbtn.red { margin-left: 9px; border-color: #fb4a41; background: #fb4a41; color: #fff; }
.rail { flex: 1; display: flex; flex-direction: column; align-items: center; gap: 24px; padding: 24px 1px 29px 0; }
.rail svg { width: 18px; height: 18px; fill: none; stroke: #96969e; stroke-width: 1.200; }
.pointer { position: absolute; left: 1195px; top: 502px; }

.watermark { position: absolute; left: 11px; bottom: 10px; display: flex; align-items: center; gap: 9px; color: #6b6c76; font: 700 37px/40px "Open Sans", sans-serif; }
```
